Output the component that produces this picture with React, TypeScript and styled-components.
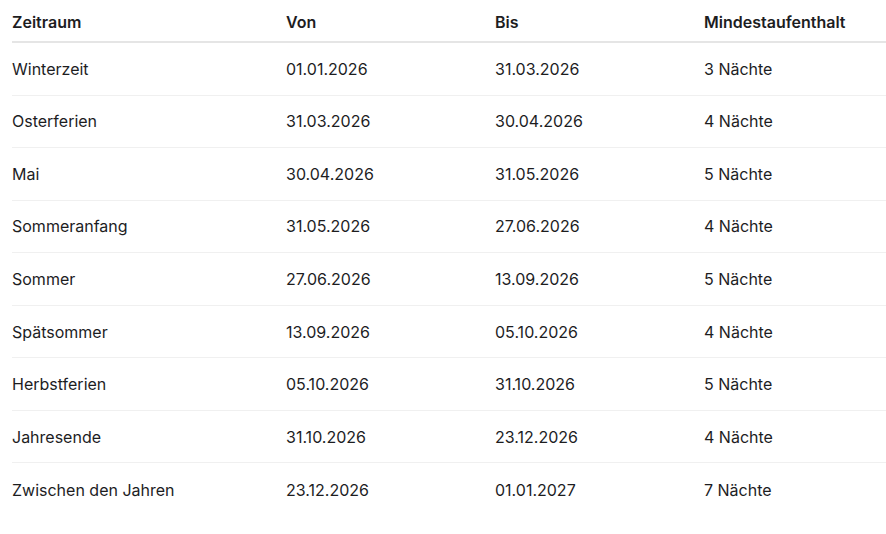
import React from 'react';
import styled, { createGlobalStyle } from 'styled-components';

const rows = [
  ['Winterzeit', '01.01.2026', '31.03.2026', '3 Nächte'],
  ['Osterferien', '31.03.2026', '30.04.2026', '4 Nächte'],
  ['Mai', '30.04.2026', '31.05.2026', '5 Nächte'],
  ['Sommeranfang', '31.05.2026', '27.06.2026', '4 Nächte'],
  ['Sommer', '27.06.2026', '13.09.2026', '5 Nächte'],
  ['Spätsommer', '13.09.2026', '05.10.2026', '4 Nächte'],
  ['Herbstferien', '05.10.2026', '31.10.2026', '5 Nächte'],
  ['Jahresende', '31.10.2026', '23.12.2026', '4 Nächte'],
  ['Zwischen den Jahren', '23.12.2026', '01.01.2027', '7 Nächte'],
];

const GlobalStyle = createGlobalStyle`
  html, body {
    margin: 0;
    padding: 0;
    background: #fff;
  }
  body {
    font-family: Inter, "Noto Sans", sans-serif;
    color: #1d1d1f;
    -webkit-font-smoothing: antialiased;
  }
`;

const Table = styled.div`
  margin-left: 12px;
  display: flex;
  flex-direction: column;
`;

const Row = styled.div<{ $head?: boolean }>`
  display: grid;
  grid-template-columns: 274px 209px 209px 1fr;
  align-items: center;
  box-sizing: border-box;
  height: ${(p) => (p.$head ? '43px' : '52.55px')};
  padding-top: ${(p) => (p.$head ? '2px' : '0')};
  border-bottom: ${(p) => (p.$head ? '2px solid #e5e5e5' : '1px solid #f0f0f0')};
  &:last-child {
    border-bottom: none;
  }
`;

const Cell = styled.div<{ $head?: boolean }>`
  font-size: 16px;
  font-weight: ${(p) => (p.$head ? 600 : 400)};
  color: #1d1d1f;
  white-space: nowrap;
`;

export default function App() {
  return (
    <>
      <GlobalStyle />
      <Table>
        <Row $head>
          {['Zeitraum', 'Von', 'Bis', 'Mindestaufenthalt'].map((h) => (
            <Cell $head key={h}>
              {h}
            </Cell>
          ))}
        </Row>
        {rows.map((r) => (
          <Row key={r[0]}>
            {r.map((c, i) => (
              <Cell key={i}>{c}</Cell>
            ))}
          </Row>
        ))}
      </Table>
    </>
  );
}
